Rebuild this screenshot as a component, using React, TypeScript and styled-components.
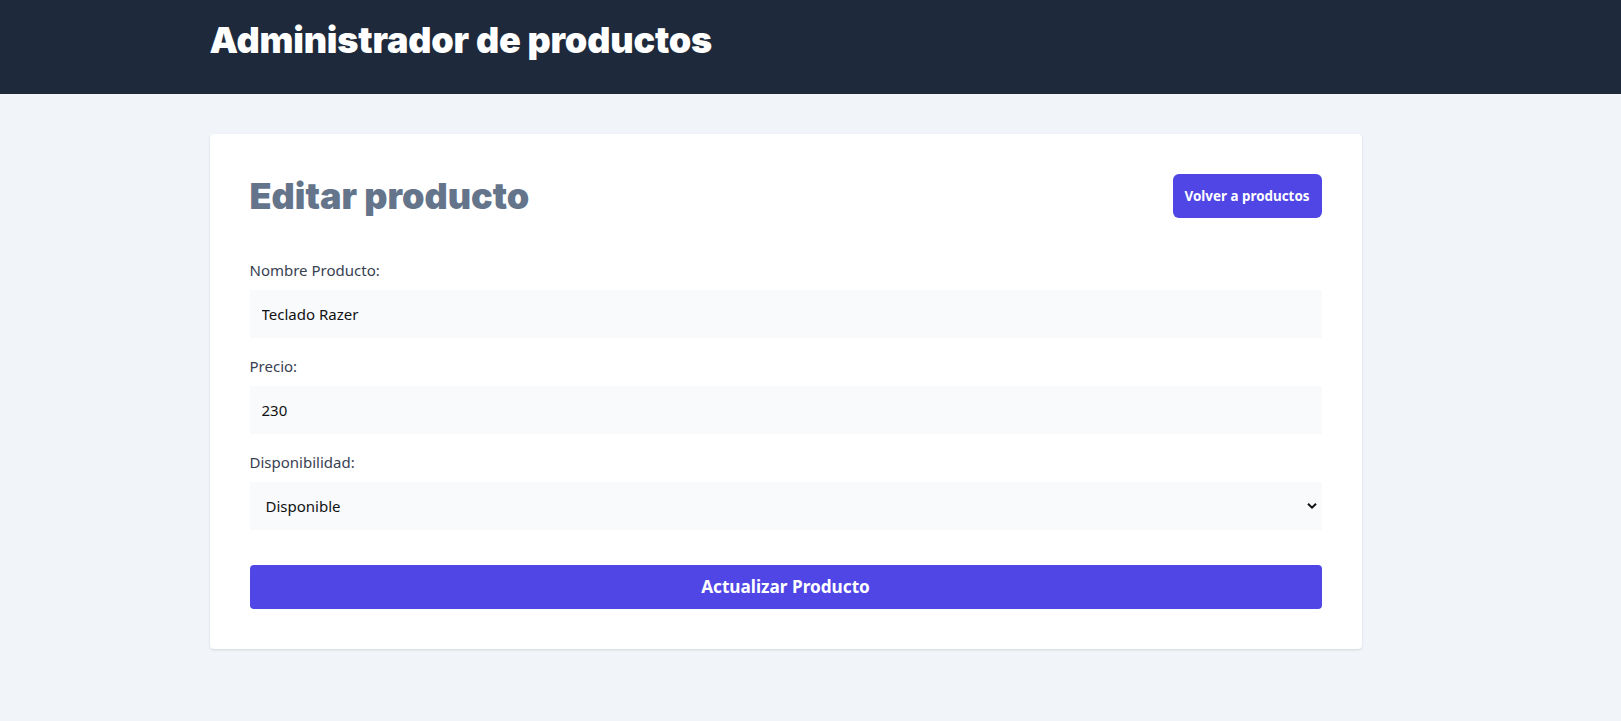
import React from "react";
import styled, { createGlobalStyle } from "styled-components";

const Global = createGlobalStyle`
  * { box-sizing: border-box; }
  html, body { margin: 0; padding: 0; }
  body {
    background: #f1f5f9;
    font-family: "Noto Sans", "Open Sans", sans-serif;
    color: #1f2937;
  }
`;

const Header = styled.header`
  background: #1e293b;
  padding: 20px 50px 34px 0;
`;

const Container = styled.div`
  max-width: 1152px;
  margin: 0 auto;
`;

const Main = styled.main`
  padding: 40px 50px 40px 0;
`;

const Title = styled.h1`
  margin: 0;
  font-family: "Inter", "Noto Sans", sans-serif;
  font-weight: 900;
  font-size: 36px;
  line-height: 40px;
  letter-spacing: -0.2px;
  color: #ffffff;
`;

const Card = styled.div`
  background: #ffffff;
  border-radius: 4px;
  box-shadow: 0 1px 3px 0 rgba(0, 0, 0, 0.1), 0 1px 2px -1px rgba(0, 0, 0, 0.1);
  padding: 40px;
`;

const TopRow = styled.div`
  display: flex;
  justify-content: space-between;
  align-items: center;
`;

const Heading = styled.h2`
  margin: 0;
  font-family: "Inter", "Noto Sans", sans-serif;
  font-weight: 900;
  font-size: 36px;
  line-height: 40px;
  color: #64748b;
`;

const BackButton = styled.a`
  display: inline-block;
  background: #4f46e5;
  color: #ffffff;
  border-radius: 6px;
  padding: 12px;
  font-size: 13.4px;
  line-height: 20px;
  font-weight: 700;
  text-decoration: none;
  cursor: pointer;
`;

const Form = styled.form`
  margin-top: 40px;
  display: flex;
  flex-direction: column;
  gap: 16px;
`;

const Field = styled.div`
  display: flex;
  flex-direction: column;
  gap: 8px;
`;

const Label = styled.label`
  font-size: 15px;
  line-height: 24px;
  color: #374151;
`;

const Input = styled.input`
  display: block;
  width: 100%;
  border: 0;
  outline: none;
  background: #f8fafc;
  padding: 12px;
  font-family: inherit;
  font-size: 15px;
  line-height: 24px;
  height: 48px;
  color: #111111;
`;

const SelectWrap = styled.div`
  position: relative;
`;

const Select = styled.select`
  display: block;
  width: 100%;
  border: 0;
  outline: none;
  appearance: none;
  background: #f8fafc;
  padding: 12px 16px;
  font-family: inherit;
  font-size: 15px;
  line-height: 24px;
  height: 48px;
  color: #111111;
`;

const Chevron = styled.svg`
  position: absolute;
  right: 5px;
  top: 50%;
  transform: translateY(-50%);
  pointer-events: none;
`;

const Submit = styled.button`
  margin-top: 19px;
  width: 100%;
  border: 0;
  border-radius: 4px;
  background: #4f46e5;
  color: #ffffff;
  padding: 8px;
  font-family: inherit;
  font-size: 17.2px;
  line-height: 28px;
  font-weight: 700;
  cursor: pointer;
`;

export default function App() {
  return (
    <>
      <Global />
      <Header>
        <Container>
          <Title>Administrador de productos</Title>
        </Container>
      </Header>
      <Main>
        <Container>
          <Card>
            <TopRow>
              <Heading>Editar producto</Heading>
              <BackButton>Volver a productos</BackButton>
            </TopRow>
            <Form onSubmit={(e) => e.preventDefault()}>
              <Field>
                <Label htmlFor="name">Nombre Producto:</Label>
                <Input id="name" type="text" defaultValue="Teclado Razer" />
              </Field>
              <Field>
                <Label htmlFor="price">Precio:</Label>
                <Input id="price" type="number" defaultValue="230" />
              </Field>
              <Field>
                <Label htmlFor="availability">Disponibilidad:</Label>
                <SelectWrap>
                  <Select id="availability" defaultValue="true">
                    <option value="true">Disponible</option>
                    <option value="false">No Disponible</option>
                  </Select>
                  <Chevron width="10" height="7" viewBox="0 0 10 7">
                    <path d="M1 1.2 L5 5.2 L9 1.2" fill="none" stroke="#111" strokeWidth="2" />
                  </Chevron>
                </SelectWrap>
              </Field>
              <Submit type="submit">Actualizar Producto</Submit>
            </Form>
          </Card>
        </Container>
      </Main>
    </>
  );
}
